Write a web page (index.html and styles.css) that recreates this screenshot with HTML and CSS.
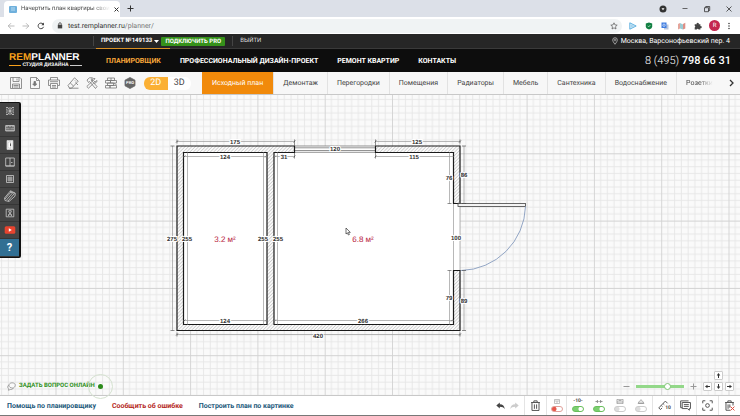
FILE: index.html
```html
<!DOCTYPE html>
<html lang="ru">
<head>
    <meta charset="UTF-8">
    <meta name="viewport" content="width=device-width, initial-scale=1.0">
    <title>Начертить план квартиры</title>
    <link rel="stylesheet" href="styles.css">
</head>
<body>
    <div class="tab-strip">
        <div class="browser-tab">
            <svg class="favicon" viewBox="0 0 8 7"><rect width="8" height="7" rx="1" fill="#6fb0dc"/><path d="M2 2h4M2 4h4" stroke="#b9dcf2"/></svg>
            <span class="tab-title">Начертить план квартиры свои</span>
            <button class="plain" aria-label="Закрыть вкладку"><svg width="5" height="5" viewBox="0 0 5 5"><path d="M.5.5l4 4M4.5.5l-4 4" stroke="#333"/></svg></button>
        </div>
        <button class="plain new-tab" aria-label="Новая вкладка"><svg width="7" height="7" viewBox="0 0 7 7"><path d="M.5 3.5h6M3.5.5v6" stroke="#333"/></svg></button>
        <div class="window-buttons">
            <svg width="8" height="8" viewBox="0 0 8 8"><circle cx="4" cy="4" r="3.5" fill="#333"/><path d="M2.5 3.2h3L4 5.3z" fill="#fff"/></svg>
            <svg width="8" height="8" viewBox="0 0 8 8"><path d="M1.5 3.5h5" stroke="#444" stroke-width=".8"/></svg>
            <svg width="8" height="8" viewBox="0 0 8 8"><path d="M1.5 2.7h4v4h-4zM2.7 2.7V1.5h4v4H5.5" fill="none" stroke="#333" stroke-width=".8"/></svg>
            <svg width="8" height="8" viewBox="0 0 8 8"><path d="M1.5 1.5l5 5M6.5 1.5l-5 5" stroke="#333" stroke-width=".8"/></svg>
        </div>
    </div>

    <div class="address-row">
        <div class="nav-buttons">
            <svg width="8" height="8" viewBox="0 0 8 8"><path d="M7.5 4H1.2M4 1.2L1.2 4 4 6.8" fill="none" stroke="#aaa" stroke-width=".8"/></svg>
            <svg width="8" height="8" viewBox="0 0 8 8"><path d="M.5 4h6.3M4 1.2L6.8 4 4 6.8" fill="none" stroke="#aaa" stroke-width=".8"/></svg>
            <svg width="8" height="8" viewBox="0 0 8 8"><path d="M6.6 4.8A2.8 2.8 0 1 1 6 2" fill="none" stroke="#444"/><path d="M7 .6v2.7H4.3z" fill="#444"/></svg>
        </div>
        <div class="address">
            <svg width="6" height="7" viewBox="0 0 6 7"><rect x=".8" y="2.8" width="4.4" height="3.6" fill="#444"/><path d="M1.8 3V1.9a1.2 1.2 0 0 1 2.4 0V3" fill="none" stroke="#444" stroke-width=".8"/></svg>
            <span class="url">test.remplanner.ru<i>/planner/</i></span>
            <svg width="8" height="8" viewBox="0 0 8 8"><path d="M4 .8l.95 2.1 2.25.25L5.5 4.7 6 7 4 5.8 2 7l.5-2.3L.8 3.15l2.25-.25z" fill="none" stroke="#555" stroke-width=".7"/></svg>
        </div>
        <div class="extensions">
            <svg width="8" height="8" viewBox="0 0 8 8"><path d="M.8.8L7.2 4 .8 7.2z" fill="#d7eefa" stroke="#55aadd" stroke-width=".9"/><path d="M2.5 3v2l2-1z" fill="#fff" stroke="#55aadd" stroke-width=".4"/></svg>
            <svg width="8" height="8" viewBox="0 0 8 8"><path d="M4 .5l3.2 1v2.7C7.2 6 5.5 7 4 7.6 2.5 7 .8 6 .8 4.2V1.5z" fill="#128043"/><path d="M2.7 3.8l1 1.1 1.7-1.9" fill="none" stroke="#cfeeda" stroke-width=".7"/></svg>
            <svg width="8" height="8" viewBox="0 0 8 8"><rect x="3" y="2.5" width="4.5" height="5" fill="#b9c6dc"/><rect x=".5" y=".5" width="5" height="5.5" fill="#3f7de0"/><circle cx="3" cy="3.2" r="1.2" fill="none" stroke="#fff" stroke-width=".6"/></svg>
            <svg width="9" height="8" viewBox="0 0 9 8"><path d="M1 2l2-1v5.5L1 7.5z" fill="#e4a59b"/><path d="M3 1l3 1.5V7.5L3 6.5z" fill="#9ccbd3"/><path d="M6 2l2.3-1.2v5.7L6 7.5z" fill="#dd8f86"/></svg>
            <svg width="8" height="8" viewBox="0 0 8 8"><path d="M.7 2.3h2a1.1 1.1 0 1 1 2 0h1.7v1.9a1 1 0 1 1 0 1.9v1.4H4.6a1 1 0 0 0-1.9 0h-2V5.4a1 1 0 0 0 0-1.7z" fill="#444"/></svg>
            <span class="avatar">R</span>
            <svg width="4" height="8" viewBox="0 0 4 8"><g fill="#444"><circle cx="2" cy="1.5" r=".8"/><circle cx="2" cy="4" r=".8"/><circle cx="2" cy="6.5" r=".8"/></g></svg>
        </div>
    </div>

    <div class="top-bar">
        <button class="plain project">ПРОЕКТ №149133 <svg width="5" height="3" viewBox="0 0 5 3"><path d="M0 0h5L2.5 3z" fill="#fff"/></svg></button>
        <button class="pro-button">ПОДКЛЮЧИТЬ PRO</button>
        <a class="logout" href="#">ВЫЙТИ</a>
        <span class="city"><svg width="6" height="8" viewBox="0 0 6 8"><path d="M3 7.3C1.5 5.3.7 4.2.7 3a2.3 2.3 0 0 1 4.6 0c0 1.2-.8 2.3-2.3 4.3z" fill="none" stroke="#ccc" stroke-width=".7"/><circle cx="3" cy="3" r=".9" fill="none" stroke="#ccc" stroke-width=".6"/></svg>Москва, Варсонофьевский пер. 4</span>
    </div>

    <header class="site-header">
        <a class="logo" href="#">
            <span class="logo-name"><b>REM</b>PLANNER</span>
            <span class="logo-sub">СТУДИЯ ДИЗАЙНА</span>
        </a>
        <nav class="main-nav">
            <a class="current" href="#">ПЛАНИРОВЩИК</a>
            <a href="#">ПРОФЕССИОНАЛЬНЫЙ ДИЗАЙН-ПРОЕКТ</a>
            <a href="#">РЕМОНТ КВАРТИР</a>
            <a href="#">КОНТАКТЫ</a>
        </nav>
        <a class="phone" href="#">8 (495) <b>798 66 31</b></a>
    </header>

    <div class="plan-bar">
        <div class="tools">
            <button class="plain" aria-label="Сохранить"><svg viewBox="0 0 12 12"><path d="M.5.5h9.5l1.5 1.5v9.5H.5zM3 .5v4h6v-4M7 1.5v2M2.5 11V7h7v4M3.5 8.5h5M3.5 10h5"/></svg></button>
            <button class="plain" aria-label="Скачать"><svg viewBox="0 0 12 12"><path d="M1.5.5h6l3 3v8h-9zM7.5.5v3h3"/><path d="M5 4.5h1.5v2.5h1.3L5.7 9 3.7 7H5z" fill="#777"/></svg></button>
            <button class="plain" aria-label="Печать"><svg viewBox="0 0 12 12"><path d="M2.5 3V.5h7V3M.5 3h11v5.5h-2V6.5h-7v2h-2zM2.5 8.5v3h7v-3M4 8.5h4M4 10h4M2 4.7h8"/></svg></button>
            <button class="plain" aria-label="Очистить"><svg viewBox="0 0 12 12"><path d="M1 8.5L7.5.8l3.7 3.4M1 8.5l1.5 2.7h2L11.2 4.2M3.3 6l3.2 3M2 11.2h9.5M8.5 5.5L11 8M8 3.5l1 1"/></svg></button>
            <button class="plain" aria-label="Инструменты"><svg viewBox="0 0 12 12"><path d="M1 3L3.5.8h3L5 3l6 6.5-1.5 2L3.5 4.5 2.5 5.5zM11 3.5L9 5 7.5 3.5 9 1.5C7 1 6 2.5 6.5 4L.8 9.5l1.7 1.7L7.8 6C9.5 6.5 11 5.5 11 3.5z"/></svg></button>
            <button class="plain" aria-label="Стены"><svg viewBox="0 0 12 12"><path d="M2.5 1h7v2.5h-7zM.5 3.5h5V6h-5zM5.5 3.5h6V6h-6zM2.5 6h6v2.5h-6zM.5 8.5H5V11H.5zM5 8.5h6.5V11H5zM6 1v2.5M9 6.5l2.5 1"/></svg></button>
            <button class="plain pro-tool" aria-label="PRO"><svg viewBox="0 0 12 12"><path d="M6 .5l5 2.7v5.6l-5 2.7-5-2.7V3.2z" fill="#666" stroke="#666"/></svg><span>PRO</span></button>
        </div>
        <div class="view-switch"><button class="active">2D</button><button>3D</button></div>
        <nav class="plan-tabs">
            <a class="active" href="#">Исходный план</a>
            <a href="#">Демонтаж</a>
            <a href="#">Перегородки</a>
            <a href="#">Помещения</a>
            <a href="#">Радиаторы</a>
            <a href="#">Мебель</a>
            <a href="#">Сантехника</a>
            <a href="#">Водоснабжение</a>
            <a class="fading" href="#">Розетки</a>
        </nav>
        <button class="plain next" aria-label="Далее"><svg width="5" height="8" viewBox="0 0 5 8"><path d="M1 1l3 3-3 3" fill="none" stroke="#333" stroke-width="1.3"/></svg></button>
    </div>

    <main class="workspace">
        <svg class="canvas" width="100%" height="100%">
            <defs>
                <pattern id="grid" x="55.5" y="58.3" width="67.3" height="67.3" patternUnits="userSpaceOnUse">
                    <path d="M6.73 0v67.3M13.46 0v67.3M20.19 0v67.3M26.92 0v67.3M33.65 0v67.3M40.38 0v67.3M47.11 0v67.3M53.84 0v67.3M60.57 0v67.3M0 6.73h67.3M0 13.46h67.3M0 20.19h67.3M0 26.92h67.3M0 33.65h67.3M0 40.38h67.3M0 47.11h67.3M0 53.84h67.3M0 60.57h67.3" stroke="#e6e6e6" stroke-width=".9"/>
                    <path d="M0 0v67.3M0 0h67.3" stroke="#d2d2d2" stroke-width="1.8"/>
                </pattern>
                <pattern id="hatch" width="2.4" height="2.4" patternUnits="userSpaceOnUse" patternTransform="rotate(45)">
                    <rect width="2.4" height="2.4" fill="#fafafa"/>
                    <path d="M0 0v2.4" stroke="#aaa" stroke-width=".9"/>
                </pattern>
            </defs>
            <rect width="100%" height="100%" fill="url(#grid)"/>
            <g transform="translate(176 50)">
                <path d="M1 1h283v185H1z" fill="#fff"/>
                <path class="dim-line" d="M277.5 59v67M284 59v67"/>
                <path d="M118.5 1h81M118.5 2.8h81M118.5 5.5h81M118.5 7.3h81" stroke="#777" stroke-width=".8"/>
                <path class="wall" fill-rule="evenodd" d="M118.5 1H1v184.5h283V125.5h-6.5V179.5H98V7.5h20.5zM7.5 7.5H91v172H7.5z"/>
                <path class="wall" d="M199.5 1H284v57.5h-6.5v-51h-78z"/>
                <rect x="282" y="58.5" width="67.5" height="3" fill="#f4f4f4" stroke="#444" stroke-width=".8"/>
                <path d="M349.5 61.5A66 66 0 0 1 285 125.5" fill="none" stroke="#7890b8" stroke-width=".8"/>
                <!-- dimension lines -->
                <path class="dim-line" d="M1-3.5h117.5M199.5-3.5H284M7.5 11.5H91M98 11.5h20.5M199.5 11.5h78M7.5 175.5H91M98 175.5h179.5M1 189.5h283"/>
                <path class="dim-line" d="M-3.5 1v184.5M11.5 7.5v172M87.5 7.5v172M101.5 7.5v172M288 1v57.5M288 125.5v60M273.5 7.5v51M273.5 125.5v54"/>
                <path class="tick" d="M1-5.5v4M118.5-5.5v6M199.5-5.5v6M284-5.5v4M118.5 8v5.5M199.5 8v5.5M1 187.5v4M284 187.5v4M-5.5 1h4M-5.5 185.5h4M286 1h4M286 58.5h4M286 125.5h4M286 185.5h4M271.5 58.5h4M271.5 125.5h4"/>
                <path class="tick" d="M0-2.5l2-2M117.5-2.5l2-2M198.5-2.5l2-2M283-2.5l2-2M117.5 12.5l2-2M198.5 12.5l2-2M0 190.5l2-2M283 190.5l2-2M7.5 12.5l2-2M89 12.5l2-2M98 12.5l2-2M7.5 176.5l2-2M89 176.5l2-2M98 176.5l2-2M275 176.5l2-2"/>
                <g class="dim">
                    <text x="59" y="-1">175</text>
                    <text x="241" y="-1">125</text>
                    <text x="159" y="6">120</text>
                    <text x="49" y="14">124</text>
                    <text x="108" y="14">31</text>
                    <text x="238" y="14">115</text>
                    <text x="-4" y="96">275</text>
                    <text x="11" y="96">255</text>
                    <text x="87" y="96">255</text>
                    <text x="102" y="96">255</text>
                    <text x="273" y="35">76</text>
                    <text x="288" y="32">86</text>
                    <text x="280" y="95">100</text>
                    <text x="273" y="155">79</text>
                    <text x="288" y="158">89</text>
                    <text x="49" y="178">124</text>
                    <text x="187" y="178">266</text>
                    <text x="142" y="193">420</text>
                </g>
                <g class="area">
                    <text x="49" y="97">3.2 м²</text>
                    <text x="187" y="97">6.8 м²</text>
                </g>
                <path d="M170 83v6l1.4-1.2 1 2.2 1-.5-1-2.1h1.9z" fill="#fff" stroke="#333" stroke-width=".7"/>
            </g>
        </svg>

        <div class="side-tools">
            <button aria-label="Перегородка"><svg viewBox="0 0 10 10"><path d="M1 1.5h2l4 7h2M1 5h8M1 8.5h2l4-7h2M1 3.2h1.5M7.5 3.2H9M1 6.8h1.5M7.5 6.8H9M4 2h2M4 8h2"/></svg></button>
            <button aria-label="Стена"><svg viewBox="0 0 10 10"><path d="M.7 2.5h8.6v5.5H.7z" fill="#999"/><path d="M1 4.5h8M1 6.3h8M3.5 3v1.5M6.5 3v1.5M5 4.5v2" stroke="#555" stroke-width=".6"/></svg></button>
            <button aria-label="Дверь"><svg viewBox="0 0 10 10"><path d="M2 .5h6v9H2z" fill="#eee"/><path d="M3 2.5l2.5-1v7L3 7.5z" fill="#fff"/><path d="M5.5 3.5v2.5" stroke="#333"/></svg></button>
            <button aria-label="Окно"><svg viewBox="0 0 10 10"><path d="M.7 1h8.6v8H.7zM5 1v8M6 5.5h1.5M.7 9h8.6"/></svg></button>
            <button aria-label="Колонна"><svg viewBox="0 0 10 10"><path d="M1.5 1.5h7v7h-7z"/><path d="M3 3h4v4H3z" fill="#999" stroke="#999"/></svg></button>
            <button aria-label="Балка"><svg class="beam" viewBox="0 0 12 12"><path d="M.5 8L6.5.8l4.8 2.4-.3 3L5 11.5 1 10.5zM1 9l6-7M2.5 10l6-7M4 11l6-7M6.5.8l.5 1.5 4 1"/></svg></button>
            <button aria-label="Вентиляция"><svg viewBox="0 0 10 10"><path d="M1.2 1.2h7.6v7.6H1.2zM3.2 6.5h1.3V5.3h1V6.5h1.3M5 5.3L3.8 4V2.7h2.4V4zM3 7.5h1.2M5.8 7.5H7"/></svg></button>
            <button aria-label="Видео"><svg viewBox="0 0 10 10"><rect x="-.3" y="1.3" width="10.6" height="7.4" rx="1.5" fill="#e8442f" stroke="none"/><path d="M3.8 3.2v3.6l3-1.8z" fill="#fff" stroke="none"/></svg></button>
            <button class="help">?</button>
        </div>

        <a class="ask" href="#">
            <svg width="9" height="9" viewBox="0 0 9 9"><path d="M5 .8c2 0 3.3 1 3.3 2.4S7 6 5.5 6C3.5 6 2 5 2 3.5S3.2.8 5 .8zM2 3C1 3.5.6 4.3.7 5.3c.1.7.6 1.2 1 1.5L1.5 8.3 3.2 7.5c1.2.2 2.5-.2 3.2-1.5" fill="none" stroke="#888" stroke-width=".7"/></svg>
            <span>ЗАДАТЬ ВОПРОС ОНЛАЙН</span>
            <span class="online"></span>
        </a>

        <div class="view-controls">
            <button class="plain" aria-label="Уменьшить"><svg width="7" height="7" viewBox="0 0 7 7"><path d="M.5 3.5h6" stroke="#999"/></svg></button>
            <input type="range" min="0" max="100" value="68" aria-label="Масштаб">
            <button class="plain" aria-label="Увеличить"><svg width="7" height="7" viewBox="0 0 7 7"><path d="M.5 3.5h6M3.5.5v6" stroke="#999"/></svg></button>
            <div class="arrows">
                <button class="up" aria-label="Вверх"><svg viewBox="0 0 7 7"><path d="M3.5 6V3" stroke="#333"/><path d="M1.7 3.5h3.6L3.5 1z"/></svg></button>
                <button class="left" aria-label="Влево"><svg viewBox="0 0 7 7"><path d="M6 3.5H3" stroke="#333"/><path d="M3.5 1.7v3.6L1 3.5z"/></svg></button>
                <button aria-label="Вниз"><svg viewBox="0 0 7 7"><path d="M3.5 1v3" stroke="#333"/><path d="M1.7 3.5h3.6L3.5 6z"/></svg></button>
                <button aria-label="Вправо"><svg viewBox="0 0 7 7"><path d="M1 3.5h3" stroke="#333"/><path d="M3.5 1.7v3.6L6 3.5z"/></svg></button>
            </div>
        </div>
    </main>

    <footer class="bottom-bar">
        <a href="#">Помощь по планировщику</a>
        <a class="report" href="#">Сообщить об ошибке</a>
        <a href="#">Построить план по картинке</a>
        <div class="actions">
            <div class="group history">
                <button class="plain" aria-label="Отменить"><svg width="9" height="8" viewBox="0 0 9 8"><path d="M.3 3.5L3.8.5v1.8c3 0 4.7 1.7 4.9 5C7.7 5.5 6.3 4.8 3.8 4.8v1.8z" fill="#444"/></svg></button>
                <button class="plain" aria-label="Вернуть"><svg width="9" height="8" viewBox="0 0 9 8"><path d="M8.7 3.5L5.2.5v1.8c-3 0-4.7 1.7-4.9 5 1-1.8 2.4-2.5 4.9-2.5v1.8z" fill="#ccc"/></svg></button>
            </div>
            <div class="group"><button class="plain" aria-label="Удалить"><svg class="action-icon" viewBox="0 0 10 10"><path d="M1 2.3h8M3.5 2.3V.8h3v1.5M1.8 2.3v7.2h6.4V2.3M4 4v4M6 4v4"/></svg></button></div>
            <div class="group overlay">
                <label class="toggle danger"><svg viewBox="0 0 8 5"><path d="M1.5.5h5v4h-5zM1.5 2h5M4 2v2.5" stroke="#aaa"/></svg><input type="checkbox" aria-label="Подложка"></label>
            </div>
            <div class="group switches">
                <label class="toggle"><span>-10-</span><input type="checkbox" aria-label="Размеры" checked></label>
                <label class="toggle"><svg viewBox="0 0 8 5"><path d="M.5 2.5h2.5M5 2.5h2.5M2 1l1.2 1.5L2 4M6 1L4.8 2.5 6 4" stroke="#666"/></svg><input type="checkbox" aria-label="Привязка" checked></label>
                <label class="toggle"><svg viewBox="0 0 8 5"><path d="M1 .3h6v4.4H1zM1 3h6M2.5 1.5h3" stroke="#888"/></svg><input type="checkbox" aria-label="Мебель"></label>
                <label class="toggle"><svg viewBox="0 0 8 5"><path d="M4 .3v1.2M1.5 4c0-3 5-3 5 0zM.8 4.5h6.4" stroke="#888"/></svg><input type="checkbox" aria-label="Свет"></label>
            </div>
            <div class="group"><button class="plain ruler" aria-label="Линейка"><svg class="action-icon" viewBox="0 0 10 10"><path d="M.7 7.2L6.7 1l2 2M.7 7.2l1.5 1.5 1.5-1.5M3 5l1 1M4.7 3.3l1 1"/></svg><span>10</span></button></div>
            <div class="group"><button class="plain" aria-label="Комментарии"><svg class="action-icon" viewBox="0 0 10 10"><path d="M.6 7V.8h7.2M2 2.3h7.5v5.5H8.5v1.5L6.7 7.8H2zM3.5 4.2H8M3.5 5.8H8M.6 7H2"/></svg></button></div>
            <div class="group"><button class="plain" aria-label="По центру"><svg class="action-icon" viewBox="0 0 10 10"><path d="M.7 3V.7H3M7 .7h2.3V3M9.3 7v2.3H7M3 9.3H.7V7"/><circle cx="5" cy="5" r="1.7"/></svg></button></div>
            <div class="group"><button class="plain" aria-label="Удалить всё"><svg class="action-icon" viewBox="0 0 10 10"><path d="M1 2.3h8M3.5 2.3V.8h3v1.5M1.8 2.3v7h4M8.2 2.3V5M3.7 4v4M5.3 4v3"/><path d="M6 6l3.5 3.5M9.5 6L6 9.5" stroke="#e04a3a"/></svg></button></div>
        </div>
    </footer>
</body>
</html>
```
FILE: styles.css
```css
* {
    box-sizing: border-box;
}

body {
    margin: 0;
    height: 100vh;
    display: flex;
    flex-direction: column;
    overflow: hidden;
    font-family: Roboto, "Open Sans", sans-serif;
    font-size: 7px;
    line-height: 10px;
    text-rendering: geometricPrecision;
    color: #444;
    background-color: #fff;
}

a {
    color: inherit;
    text-decoration: none;
}

button {
    font: inherit;
    color: inherit;
    padding: 0;
    margin: 0;
    border: none;
    text-rendering: inherit;
}

svg {
    flex-shrink: 0;
}

.plain {
    display: flex;
    align-items: center;
    justify-content: center;
    background: none;
}

/* browser */
.tab-strip {
    display: flex;
    align-items: center;
    height: 17px;
    flex-shrink: 0;
    padding-left: 4px;
    background-color: #dce0e8;
}

.browser-tab {
    display: flex;
    align-items: center;
    gap: 4px;
    align-self: flex-end;
    width: 116px;
    height: 16px;
    padding: 0 5px;
    background-color: #fff;
    border-radius: 4px 4px 0 0;
}

.favicon {
    width: 8px;
    height: 7px;
}

.tab-title {
    flex: 1;
    font-size: 6px;
    white-space: nowrap;
    -webkit-mask-image: linear-gradient(90deg, #000 80%, transparent);
    mask-image: linear-gradient(90deg, #000 80%, transparent);
}

.new-tab {
    margin-left: 7px;
}

.window-buttons {
    display: flex;
    gap: 14px;
    margin-left: auto;
    padding-right: 7px;
}

.address-row {
    display: flex;
    align-items: center;
    height: 17px;
    flex-shrink: 0;
    background-color: #fff;
}

.nav-buttons {
    display: flex;
    gap: 7px;
    padding: 0 7px;
}

.address {
    flex: 1;
    display: flex;
    align-items: center;
    gap: 5px;
    height: 14px;
    padding: 0 4px 0 5px;
    border-radius: 7px;
    background-color: #f0f3f4;
}

.url {
    flex: 1;
    color: #333;
}

.url i {
    font-style: normal;
    color: #777;
}

.extensions {
    display: flex;
    align-items: center;
    gap: 8px;
    padding: 0 9px 0 7px;
}

.avatar {
    width: 11px;
    height: 11px;
    margin: 0 -1px;
    border-radius: 50%;
    background-color: #c4264f;
    color: #fff;
    font-size: 6px;
    line-height: 11px;
    text-align: center;
}

/* site header */
.top-bar {
    display: flex;
    align-items: center;
    height: 15px;
    flex-shrink: 0;
    padding: 0 10px 0 93px;
    background-color: #262626;
    border-bottom: 1px solid #3a3a3a;
    color: #fff;
    font-size: 6px;
}

.project {
    gap: 2px;
    padding-left: 7px;
    border-left: 1px solid #444;
    font-weight: bold;
    white-space: nowrap;
}

.pro-button {
    width: 64px;
    height: 9px;
    margin-left: 2px;
    border-radius: 1px;
    background-color: #35911a;
    font-weight: bold;
    line-height: 9px;
}

.logout {
    margin-left: 7px;
    padding-left: 7px;
    border-left: 1px solid #444;
    color: #ddd;
}

.city {
    display: flex;
    align-items: center;
    gap: 3px;
    margin-left: auto;
    font-size: 7px;
}

.site-header {
    display: flex;
    align-items: center;
    height: 23px;
    flex-shrink: 0;
    padding: 0 9px;
    background-color: #0d0d0d;
    color: #fff;
}

.logo {
    display: flex;
    flex-direction: column;
    width: 87px;
    font-family: "Liberation Sans", sans-serif;
    font-weight: bold;
}

.logo-name {
    font-size: 10px;
    line-height: 9px;
}

.logo-name b {
    color: #f9a11b;
}

.logo-sub {
    display: flex;
    align-items: center;
    gap: 1px;
    width: 73px;
    font-size: 5px;
    line-height: 6px;
}

.logo-sub::before,
.logo-sub::after {
    content: "";
    flex: 1;
    height: 1px;
    background-color: #f9a11b;
}

.logo-sub::after {
    background-color: #ccc;
}

.main-nav {
    display: flex;
    align-self: stretch;
    font-weight: bold;
}

.main-nav a {
    padding: 0 9px 0 10px;
    line-height: 24px;
}

.main-nav .current {
    color: #f9a83a;
    box-shadow: 0 -1px 0 #d99025;
}

.phone {
    margin-left: auto;
    font-size: 11px;
    font-weight: 300;
}

.phone b {
    font-weight: 500;
}

/* plan toolbar */
.plan-bar {
    display: flex;
    align-items: center;
    height: 23px;
    flex-shrink: 0;
    padding-left: 10px;
    background-color: #f7f7f7;
    border-bottom: 1px solid #c8c8c8;
}

.tools {
    display: flex;
    gap: 7px;
}

.tools svg {
    width: 12px;
    height: 12px;
    fill: none;
    stroke: #777;
    stroke-width: .8;
}

.pro-tool {
    position: relative;
}

.pro-tool span {
    position: absolute;
    font-size: 4px;
    font-weight: bold;
    color: #fff;
}

.view-switch {
    display: flex;
    width: 47px;
    height: 13px;
    margin: 0 11px 0 8px;
    border-radius: 6px;
    overflow: hidden;
    background-color: #fff;
    font-size: 9px;
}

.view-switch button {
    flex: 1;
    background: none;
    line-height: 13px;
}

.view-switch .active {
    background-color: #fbb034;
    color: #fff;
}

.plan-tabs {
    display: flex;
    flex: 1;
    align-self: stretch;
}

.plan-tabs a {
    padding: 0 9px;
    border-right: 1px solid #e2e2e2;
    line-height: 23px;
    white-space: nowrap;
}

.plan-tabs .active {
    padding: 0 10px;
    background-color: #f18a0b;
    color: #fff;
}

.plan-tabs .fading {
    padding-right: 0;
    border-right: none;
    -webkit-mask-image: linear-gradient(90deg, #000 60%, transparent);
    mask-image: linear-gradient(90deg, #000 60%, transparent);
}

.next {
    width: 21px;
    padding-left: 4px;
}

/* drawing area */
.workspace {
    position: relative;
    flex: 1;
    min-height: 0;
    background-color: #fafafa;
}

.canvas {
    display: block;
    position: absolute;
}

.wall {
    fill: url(#hatch);
    stroke: #1a1a1a;
    stroke-width: 1.2;
}

.dim-line {
    fill: none;
    stroke: #999;
    stroke-width: .7;
}

.tick {
    fill: none;
    stroke: #444;
    stroke-width: .6;
}

.dim text {
    font: bold 6px "Liberation Sans", sans-serif;
    fill: #333;
    stroke: #fff;
    stroke-width: 2px;
    paint-order: stroke;
    text-anchor: middle;
}

.area text {
    font: 8px "Liberation Sans", sans-serif;
    fill: #b8233c;
    text-anchor: middle;
}

.side-tools {
    position: absolute;
    top: 7px;
    left: 0;
    width: 21px;
    padding: 1px 1px 1px 0;
    background-color: #111;
    border-radius: 0 2px 2px 0;
}

.side-tools button {
    display: flex;
    align-items: center;
    justify-content: center;
    width: 19px;
    height: 17px;
    background-color: #444;
    border-bottom: 1px solid #363636;
}

.side-tools svg {
    width: 10px;
    height: 10px;
    overflow: visible;
    fill: none;
    stroke: #ccc;
    stroke-width: .8;
}

.side-tools .beam {
    width: 12px;
    height: 12px;
}

.side-tools .help {
    height: 18px;
    background-color: #316f93;
    color: #fff;
    font-size: 11px;
    font-weight: bold;
}

.ask {
    position: absolute;
    left: 7px;
    bottom: 0;
    display: flex;
    align-items: center;
    gap: 3px;
    height: 18px;
    color: #2f8f1c;
    font-size: 6px;
    font-weight: bold;
}

.online {
    width: 5px;
    height: 5px;
    border-radius: 50%;
    background-color: #2b8a1b;
    outline: 1px solid #d5e2d0;
    outline-offset: 9px;
}

.view-controls {
    position: absolute;
    right: 6px;
    bottom: 4px;
    display: flex;
    align-items: flex-end;
    gap: 6px;
}

.view-controls > .plain {
    height: 9px;
}

.view-controls input {
    appearance: none;
    width: 48px;
    height: 9px;
    margin: 0;
    background: linear-gradient(#93d889, #93d889) center / 100% 3px no-repeat;
}

.view-controls input::-webkit-slider-thumb {
    appearance: none;
    width: 7px;
    height: 7px;
    border: 1px solid #7fc575;
    border-radius: 50%;
    background-color: #fff;
}

.arrows {
    display: grid;
    grid-template-columns: repeat(3, 9px);
    gap: 2px;
}

.arrows button {
    display: flex;
    align-items: center;
    justify-content: center;
    height: 9px;
    background-color: #fff;
    border: 1px solid #ccc;
    border-radius: 1px;
}

.arrows .up {
    grid-column: 2;
}

.arrows .left {
    grid-column: 1;
}

.arrows svg {
    width: 7px;
    height: 7px;
    fill: #333;
}

/* bottom bar */
.bottom-bar {
    display: flex;
    align-items: center;
    gap: 16px;
    height: 21px;
    flex-shrink: 0;
    padding-left: 7px;
    border-top: 1px solid #c8c8c8;
    border-bottom: 1px solid #777;
    background-color: #fff;
    color: #22587a;
    font-weight: bold;
}

.bottom-bar .report {
    color: #b5281e;
}

.actions {
    display: flex;
    align-self: stretch;
    margin-left: auto;
    color: #444;
}

.group {
    display: flex;
    align-items: center;
    justify-content: center;
    width: 22px;
    border-left: 1px solid #e4e4e4;
}

.history {
    gap: 5px;
    width: 34px;
    border-left: none;
}

.overlay {
    width: 20px;
}

.switches {
    width: 86px;
}

.action-icon {
    width: 11px;
    height: 11px;
    fill: none;
    stroke: #555;
    stroke-width: .9;
}

.toggle {
    display: flex;
    flex-direction: column;
    align-items: center;
    gap: 2px;
    width: 21px;
}

.toggle svg {
    width: 8px;
    height: 5px;
    fill: none;
    stroke-width: .7;
}

.toggle span {
    font-size: 5px;
    line-height: 5px;
    font-weight: bold;
}

.toggle input {
    appearance: none;
    width: 12px;
    height: 6px;
    margin: 0;
    border: 1px solid #ccc;
    border-radius: 3px;
    background: radial-gradient(circle at 2px 2px, #ddd 2px, #fff 3px);
}

.toggle input:checked {
    border-color: #69bf5c;
    background: radial-gradient(circle at 8px 2px, #fff 2px, #7ccf70 3px);
}

.danger input {
    background: radial-gradient(circle at 2px 2px, #e8574a 2px, #fff 3px);
    border-color: #e0a09a;
}

.ruler {
    position: relative;
}

.ruler span {
    position: absolute;
    right: -2px;
    bottom: 0;
    font-size: 5px;
    line-height: 5px;
    font-weight: bold;
}
```
